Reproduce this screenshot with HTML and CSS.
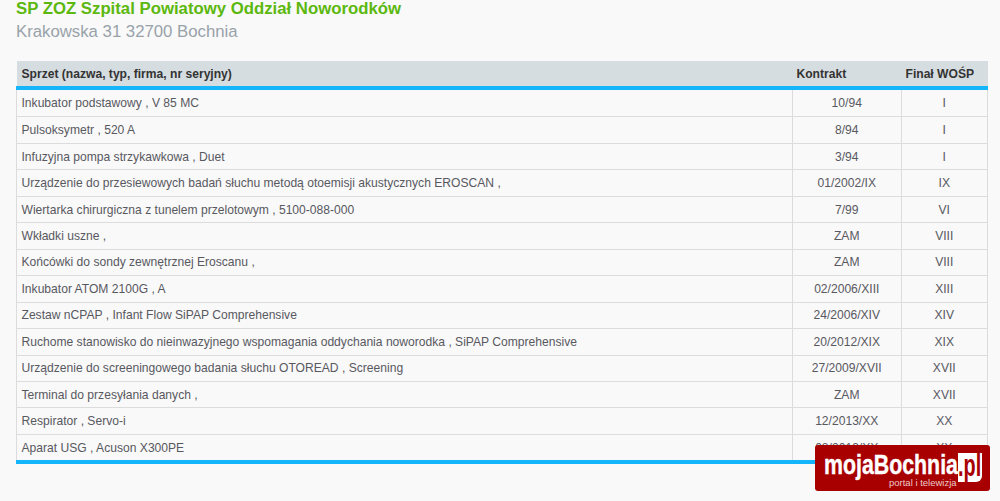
FILE: index.html
```html
<!DOCTYPE html>
<html lang="pl">
<head>
<meta charset="utf-8">
<title>SP ZOZ Szpital Powiatowy</title>
<link rel="stylesheet" href="styles.css">
</head>
<body>
<h1 class="title">SP ZOZ Szpital Powiatowy Oddział Noworodków</h1>
<h2 class="subtitle">Krakowska 31 32700 Bochnia</h2>
<table class="equipment">
<thead>
<tr><th class="name">Sprzet (nazwa, typ, firma, nr seryjny)</th><th class="contract">Kontrakt</th><th class="final">Finał WOŚP</th></tr>
</thead>
<tbody>
<tr><td>Inkubator podstawowy , V 85 MC</td><td>10/94</td><td>I</td></tr>
<tr><td>Pulsoksymetr , 520 A</td><td>8/94</td><td>I</td></tr>
<tr><td>Infuzyjna pompa strzykawkowa , Duet</td><td>3/94</td><td>I</td></tr>
<tr><td>Urządzenie do przesiewowych badań słuchu metodą otoemisji akustycznych EROSCAN ,</td><td>01/2002/IX</td><td>IX</td></tr>
<tr><td>Wiertarka chirurgiczna z tunelem przelotowym , 5100-088-000</td><td>7/99</td><td>VI</td></tr>
<tr><td>Wkładki uszne ,</td><td>ZAM</td><td>VIII</td></tr>
<tr><td>Końcówki do sondy zewnętrznej Eroscanu ,</td><td>ZAM</td><td>VIII</td></tr>
<tr><td>Inkubator ATOM 2100G , A</td><td>02/2006/XIII</td><td>XIII</td></tr>
<tr><td>Zestaw nCPAP , Infant Flow SiPAP Comprehensive</td><td>24/2006/XIV</td><td>XIV</td></tr>
<tr><td>Ruchome stanowisko do nieinwazyjnego wspomagania oddychania noworodka , SiPAP Comprehensive</td><td>20/2012/XIX</td><td>XIX</td></tr>
<tr><td>Urządzenie do screeningowego badania słuchu OTOREAD , Screening</td><td>27/2009/XVII</td><td>XVII</td></tr>
<tr><td>Terminal do przesyłania danych ,</td><td>ZAM</td><td>XVII</td></tr>
<tr><td>Respirator , Servo-i</td><td>12/2013/XX</td><td>XX</td></tr>
<tr><td>Aparat USG , Acuson X300PE</td><td>08/2013/XX</td><td>XX</td></tr>
</tbody>
</table>
<div class="logo">
<div class="logo-main"><span class="logo-word">mojaBochnia</span><span class="logo-pl"><span class="logo-pl-text">.pl</span></span></div>
<div class="logo-sub">portal i telewizja</div>
</div>
</body>
</html>
```
FILE: styles.css
```css
html, body { margin: 0; padding: 0; height: 501px; overflow: hidden; }
body {
  background: #f9f9f9;
  font-family: "Liberation Sans", Arial, sans-serif;
  color: #555;
  padding: 0 13px 0 16px;
  position: relative;
}
.title {
  margin: 0;
  font-size: 16.75px;
  line-height: 18px;
  font-weight: 700;
  color: #5cb80f;
}
.subtitle {
  margin: 1px 0 16px;
  font-size: 16.75px;
  line-height: 26px;
  font-weight: 400;
  color: #98a2a9;
}
.equipment {
  width: 971px;
  table-layout: fixed;
  border-collapse: collapse;
  font-size: 12.1px;
}
.equipment th {
  box-sizing: border-box;
  background: #d6dde1;
  color: #333;
  font-size: 12.1px;
  font-weight: 700;
  height: 27px;
  padding: 0 5px;
  text-align: left;
  border-bottom: 4px solid #15b5fb;
}
.equipment .name { width: 776px; }
.equipment .contract { width: 109px; padding-left: 4px; }
.equipment .final { width: 86px; padding-left: 4px; }
.equipment td {
  height: 25.46px;
  padding: 0 5px 0 4.5px;
  border: 1px solid #dcdcdc;
  color: #58585f;
  text-align: center;
}
.equipment td:first-child { text-align: left; }
.equipment tbody tr:first-child td { height: 26.46px; }
.equipment tbody tr:last-child td { border-bottom: 4px solid #15b5fb; }
.logo {
  position: absolute;
  left: 815px;
  top: 445px;
  width: 175px;
  height: 46px;
  box-sizing: border-box;
  padding: 8px 8px 0 9px;
  border-radius: 3px;
  background: #a80000;
  color: #fff;
}
.logo-main {
  display: flex;
  align-items: flex-start;
  height: 24px;
}
.logo-word {
  display: block;
  flex: none;
  width: 134px;
  font-size: 27px;
  line-height: 24px;
  font-weight: 700;
  white-space: nowrap;
  -webkit-text-stroke: 0.4px #fff;
  transform: scaleX(0.79);
  transform-origin: left top;
}
.logo-pl {
  display: block;
  flex: none;
  width: 24px;
  height: 29px;
  background: #fff;
  color: #a80000;
  border-bottom-right-radius: 6px;
  box-sizing: border-box;
}
.logo-pl-text {
  display: block;
  font-size: 31px;
  line-height: 25px;
  font-weight: 700;
  white-space: nowrap;
  transform: scaleX(0.64);
  transform-origin: left top;
}
.logo-sub {
  font-size: 9.5px;
  line-height: 10px;
  margin-top: 1px;
  padding-left: 65px;
  color: #eccaca;
  white-space: nowrap;
}
```
